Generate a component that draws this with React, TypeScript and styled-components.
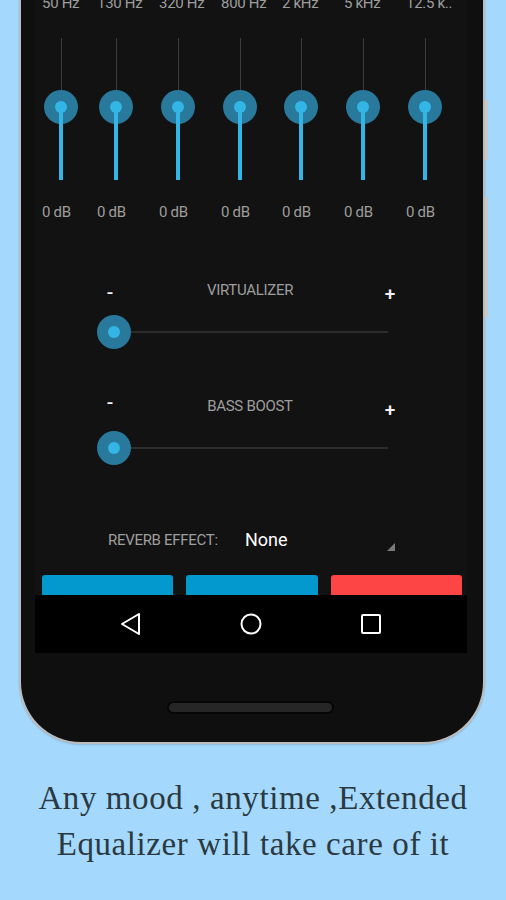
import React from "react";
import styled, { createGlobalStyle } from "styled-components";

const GlobalStyle = createGlobalStyle`
  html, body { margin: 0; padding: 0; }
  body {
    background: #a5d8fd;
    width: 506px;
    height: 900px;
    overflow: hidden;
    font-family: Roboto, "Noto Sans", sans-serif;
  }
`;

const Page = styled.div`
  width: 506px;
  height: 900px;
  display: flex;
  flex-direction: column;
`;

const Phone = styled.div`
  position: relative;
  box-sizing: border-box;
  margin-left: 19px;
  width: 466px;
  height: 744px;
  padding: 0 16px 0 14px;
  background: #0f0f0f;
  border: 2px solid #bcbcbc;
  border-top: none;
  border-radius: 0 0 62px 62px;
  display: flex;
  flex-direction: column;
  box-shadow: 0 1px 2px rgba(0, 0, 0, 0.15);
`;

const SideButton = styled.div<{ $top: number; $h: number }>`
  position: absolute;
  right: -5px;
  top: ${(p) => p.$top}px;
  width: 3px;
  height: ${(p) => p.$h}px;
  background: #c9c9c9;
  border-radius: 0 2px 2px 0;
`;

const Screen = styled.div`
  width: 432px;
  height: 653px;
  display: flex;
  flex-direction: column;
`;

const AppArea = styled.div`
  height: 595px;
  background: #121212;
  overflow: hidden;
  display: flex;
  flex-direction: column;
`;

const EqGrid = styled.div`
  display: grid;
  grid-template-columns: 55px 62px 62px 61px 62px 62px 62px;
  padding-left: 7px;
  margin-top: -5px;
`;

const EqColumn = styled.div`
  display: flex;
  flex-direction: column;
  align-items: flex-start;
`;

const SmallLabel = styled.div`
  font-size: 15px;
  letter-spacing: -0.3px;
  line-height: 16px;
  color: #9e9e9e;
  white-space: nowrap;
`;

const DbLabel = styled(SmallLabel)`
  margin-top: 24px;
`;

const VSlider = styled.div`
  position: relative;
  width: 38px;
  height: 142px;
  margin-top: 27px;
`;

const VTrack = styled.div`
  position: absolute;
  left: 18.5px;
  top: 0;
  bottom: 0;
  width: 1px;
  background: #3c3c3c;
`;

const VFill = styled.div`
  position: absolute;
  left: 17px;
  bottom: 0;
  width: 4px;
  background: #33b5e5;
  z-index: 2;
`;

const ThumbHalo = styled.div`
  position: absolute;
  width: 34px;
  height: 34px;
  border-radius: 50%;
  background: #28799b;
  z-index: 1;
`;

const ThumbDot = styled.div`
  position: absolute;
  width: 12px;
  height: 12px;
  border-radius: 50%;
  background: #33b5e5;
  z-index: 3;
`;

const EffectSection = styled.section<{ $mt: number }>`
  width: 309px;
  margin: ${(p) => p.$mt}px 0 0 62px;
  display: flex;
  flex-direction: column;
`;

const EffectHeader = styled.div`
  height: 16px;
  display: flex;
  align-items: center;
  justify-content: space-between;
  padding: 0 10px 0 7px;
`;

const Sign = styled.span<{ $dy: number }>`
  width: 12px;
  text-align: center;
  color: #f2f2f2;
  font-size: 19px;
  font-weight: 500;
  line-height: 16px;
  transform: translateY(${(p) => p.$dy}px);
`;

const EffectTitle = styled(SmallLabel)`
  text-transform: uppercase;
`;

const HSlider = styled.div`
  position: relative;
  height: 36px;
  margin-top: 16px;
`;

const HTrack = styled.div`
  position: absolute;
  left: 17px;
  right: 18px;
  top: 17px;
  height: 2px;
  background: #2c2c2c;
`;

const ReverbRow = styled.div`
  display: flex;
  align-items: center;
  width: 287px;
  height: 22px;
  margin: 63px 0 0 73px;
`;

const ReverbLabel = styled(SmallLabel)`
  width: 137px;
`;

const ReverbValue = styled.div`
  flex: 1;
  font-size: 18px;
  line-height: 22px;
  color: #ffffff;
`;

const Caret = styled.div`
  align-self: flex-end;
  width: 0;
  height: 0;
  border-left: 8px solid transparent;
  border-bottom: 8px solid #7a7a7a;
`;

const ButtonRow = styled.div`
  display: grid;
  grid-template-columns: repeat(3, 1fr);
  gap: 13px;
  padding: 0 5px 0 7px;
  margin-top: 24px;
`;

const ActionButton = styled.div<{ $color: string }>`
  height: 48px;
  border-radius: 3px;
  background: ${(p) => p.$color};
`;

const NavBar = styled.nav`
  height: 58px;
  background: #000;
  display: grid;
  grid-template-columns: repeat(3, 120px);
  padding-left: 36px;
  align-items: center;
  justify-items: center;
`;

const Chin = styled.div`
  flex: 1;
  display: flex;
  justify-content: center;
  padding-top: 48px;
  padding-right: 2px;
`;

const Speaker = styled.div`
  box-sizing: border-box;
  width: 167px;
  height: 13px;
  border-radius: 7px;
  background: #262626;
  border: 2px solid #060606;
`;

const Caption = styled.div`
  margin-top: 31px;
  text-align: center;
  font-family: "Liberation Serif", "DejaVu Serif", serif;
  font-size: 33px;
  letter-spacing: 0.6px;
  line-height: 46px;
  color: #2b3940;
`;

const CaptionLine = styled.div``;

const bands = ["50 Hz", "130 Hz", "320 Hz", "800 Hz", "2 kHz", "5 kHz", "12.5 k.."];

const VerticalBand: React.FC<{ label: string; value: number }> = ({ label, value }) => {
  const center = 69 - (value / 15) * 69;
  return (
    <EqColumn>
      <SmallLabel>{label}</SmallLabel>
      <VSlider>
        <VTrack />
        <VFill style={{ top: `${center}px` }} />
        <ThumbHalo style={{ top: `${center - 17}px`, left: "2px" }} />
        <ThumbDot style={{ top: `${center - 6}px`, left: "13px" }} />
      </VSlider>
      <DbLabel>{value} dB</DbLabel>
    </EqColumn>
  );
};

const Effect: React.FC<{ title: string; mt: number; minusDy: number; plusDy: number }> = ({
  title,
  mt,
  minusDy,
  plusDy,
}) => (
  <EffectSection $mt={mt}>
    <EffectHeader>
      <Sign $dy={minusDy}>-</Sign>
      <EffectTitle>{title}</EffectTitle>
      <Sign $dy={plusDy}>+</Sign>
    </EffectHeader>
    <HSlider>
      <HTrack />
      <ThumbHalo style={{ top: "1px", left: "0px" }} />
      <ThumbDot style={{ top: "12px", left: "11px" }} />
    </HSlider>
  </EffectSection>
);

export default function App() {
  return (
    <Page>
      <GlobalStyle />
      <Phone>
        <SideButton $top={100} $h={60} />
        <SideButton $top={197} $h={121} />
        <Screen>
          <AppArea>
            <EqGrid>
              {bands.map((b) => (
                <VerticalBand key={b} label={b} value={0} />
              ))}
            </EqGrid>
            <Effect title="Virtualizer" mt={62} minusDy={3} plusDy={4} />
            <Effect title="Bass Boost" mt={48} minusDy={-3} plusDy={4} />
            <ReverbRow>
              <ReverbLabel>REVERB EFFECT:</ReverbLabel>
              <ReverbValue>None</ReverbValue>
              <Caret />
            </ReverbRow>
            <ButtonRow>
              <ActionButton $color="#0399cf" />
              <ActionButton $color="#0399cf" />
              <ActionButton $color="#fe4545" />
            </ButtonRow>
          </AppArea>
          <NavBar>
            <svg width="24" height="24" viewBox="0 0 24 24">
              <path d="M20 2 L3 12 L20 22 Z" fill="none" stroke="#fff" strokeWidth="2" strokeLinejoin="round" />
            </svg>
            <svg width="24" height="24" viewBox="0 0 24 24">
              <circle cx="12" cy="12" r="9.5" fill="none" stroke="#fff" strokeWidth="2" />
            </svg>
            <svg width="24" height="24" viewBox="0 0 24 24">
              <rect x="3" y="3" width="18" height="18" rx="1" fill="none" stroke="#fff" strokeWidth="2" />
            </svg>
          </NavBar>
        </Screen>
        <Chin>
          <Speaker />
        </Chin>
      </Phone>
      <Caption>
        <CaptionLine>Any mood , anytime ,Extended</CaptionLine>
        <CaptionLine>Equalizer will take care of it</CaptionLine>
      </Caption>
    </Page>
  );
}
